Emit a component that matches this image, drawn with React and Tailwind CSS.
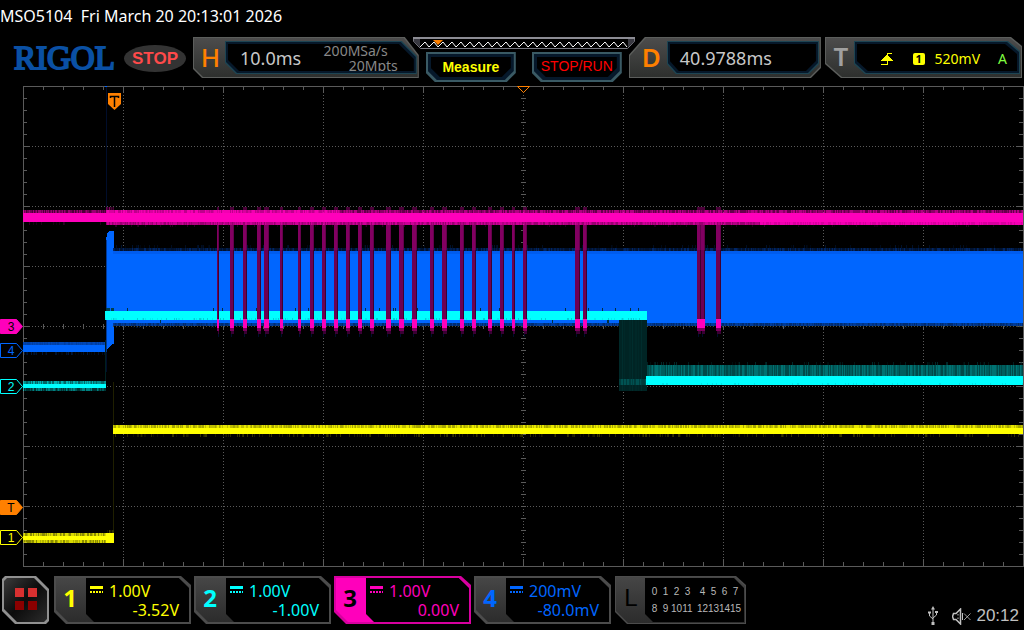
import clsx from 'clsx'

const GRID = { left: 23, right: 1023, top: 86, bottom: 566, midX: 523, midY: 326 }

const channels = [
  { id: 1, scale: '1.00V', offset: '-3.52V', text: 'text-[#ffff00]' },
  { id: 2, scale: '1.00V', offset: '-1.00V', text: 'text-[#00ffff]' },
  { id: 3, scale: '1.00V', offset: '0.00V', text: 'text-[#ff00bb]', active: true },
  { id: 4, scale: '200mV', offset: '-80.0mV', text: 'text-[#0066ff]' },
]

// [x, width] of every data burst on channel 3
const bursts = [
  [217, 2], [230, 4], [243, 4], [257, 4], [264, 5], [280, 3], [298, 3], [310, 4],
  [322, 4], [334, 4], [346, 4], [358, 4], [370, 4], [386, 5], [399, 5], [412, 5],
  [430, 4], [442, 5], [460, 4], [472, 4], [488, 4], [500, 4], [512, 3], [523, 4],
  [575, 5], [583, 4], [697, 4], [701, 4], [716, 5],
]

const range = (from, to, step) => {
  const out = []
  for (let v = from; v <= to; v += step) out.push(v)
  return out
}

// Repeatable random numbers, so the traces look the same on every render
const createRandom = (seed) => {
  let a = seed
  return () => {
    a = (a + 0x6d2b79f5) | 0
    let t = Math.imul(a ^ (a >>> 15), 1 | a)
    t = (t + Math.imul(t ^ (t >>> 7), 61 | t)) ^ t
    return ((t ^ (t >>> 14)) >>> 0) / 4294967296
  }
}

// One strip of flickering one-pixel columns, grouped in brightness levels
const Noise = ({ x, to, y, h, color, levels = [0.25, 0.45, 0.65, 0.85], density = 1 }) => {
  const paths = levels.map(() => '')
  const next = createRandom(x * 131 + y * 17 + h)
  for (let i = x; i < to; i++) {
    const level = Math.floor(next() * levels.length)
    if (next() <= density) paths[level] += `M${i} ${y}h1v${h}h-1z`
  }
  return paths.map((d, i) => <path key={i} d={d} fill={color} opacity={levels[i]} />)
}

const Graticule = () => {
  const { left, right, top, bottom, midX, midY } = GRID
  const cols = range(left + 100, right - 100, 100)
  const rows = range(top + 60, bottom - 60, 60)
  const xTicks = range(left + 20, right - 20, 20)
  const yTicks = range(top + 12, bottom - 12, 12)
  const dotted = [
    ...cols.map((x) => `M${x}.5 ${top}V${bottom}`),
    ...rows.map((y) => `M${left} ${y}.5H${right}`),
  ].join('')
  const solid = [
    ...xTicks.map((x) => {
      const len = (x - left) % 100 === 0 ? 7 : 4
      return `M${x}.5 ${top}v${len}M${x}.5 ${bottom}v-${len}M${x}.5 ${midY - 2}v5`
    }),
    ...yTicks.map((y) => {
      const len = (y - top) % 60 === 0 ? 7 : 4
      return `M${left} ${y}.5h${len}M${right} ${y}.5h-${len}M${midX - 2} ${y}.5h5`
    }),
  ].join('')
  return (
    <g fill="none" stroke="#5a5a5a">
      <path d={dotted} strokeDasharray="1 2" />
      <path d={solid} />
      <rect x={left + 0.5} y={top + 0.5} width={right - left - 0.5} height={bottom - top} />
    </g>
  )
}

const Traces = () => (
  <g>
    {/* Trigger edge */}
    <path d="M106 87h1v130h-1z" fill="#000d2b" />
    <path d="M105 86h2v1h-2z" fill="#0066ff" />
    <path d="M113 382h1v151h-1z" fill="#1f1f00" />
    <path d="M105 340h1v45h-1z" fill="#002020" />

    {/* Channel 4 */}
    <path d="M23 345h82v7h-82z" fill="#0066ff" />
    <path d="M23 342h82v3h-82z" fill="#003a99" />
    <Noise x={23} to={105} y={342} h={3} color="#0066ff" levels={[0.1, 0.2, 0.3]} />
    <Noise x={23} to={105} y={352} h={3} color="#001a44" density={0.4} />
    <path d="M106 352h1v20h-1z" fill="#000d2b" />
    <path d="M106 240l1-6 2-3h5v113h-2l-3 3-3 5z" fill="#0066ff" />
    <path d="M106 240h1v112h-1z" fill="#003a99" />
    <path d="M113 251h910v72h-910z" fill="#0066ff" />
    <path d="M113 251h910v3h-910z" fill="#005cee" />
    <path d="M113 248h910v3h-910z" fill="#00112e" />
    <Noise x={113} to={1023} y={248} h={3} color="#003a99" levels={[0.1, 0.3, 0.5]} density={0.6} />
    <Noise x={113} to={1023} y={245} h={3} color="#001433" density={0.12} />
    <path d="M113 323h910v3h-910z" fill="#003c99" />
    <Noise x={113} to={1023} y={323} h={3} color="#001433" levels={[0.2, 0.4]} density={0.6} />
    <Noise x={113} to={1023} y={326} h={2} color="#001433" density={0.15} />
    <path d="M113 326.5h910" stroke="#4a4a30" strokeDasharray="1 2" />

    {/* Channel 2 */}
    <path d="M23 384h83v4h-83z" fill="#00ffff" />
    <Noise x={23} to={106} y={381} h={3} color="#00ffff" levels={[0.4, 0.55, 0.7]} />
    <Noise x={23} to={106} y={388} h={3} color="#00ffff" levels={[0.2, 0.35, 0.5]} />
    <path d="M105 311h542v9h-542z" fill="#00ffff" />
    <Noise x={105} to={114} y={308} h={3} color="#003a3a" levels={[0.9]} density={0.8} />
    <Noise x={113} to={640} y={308} h={3} color="#002a2a" levels={[0.9]} density={0.03} />
    <Noise x={113} to={640} y={320} h={3} color="#002a2a" levels={[0.9]} density={0.015} />
    <Noise x={105} to={647} y={318} h={2} color="#00a0b0" levels={[0.2, 0.5]} density={0.25} />
    <path d="M619 320h28v71h-28z" fill="#002424" />
    <Noise x={619} to={647} y={320} h={71} color="#003c3c" levels={[0.2, 0.4]} density={0.5} />
    <Noise x={619} to={647} y={379} h={6} color="#007070" levels={[0.3, 0.6]} />
    <path d="M647 365h376v11h-376z" fill="#003c3c" />
    <Noise x={647} to={1023} y={365} h={11} color="#008080" levels={[0.2, 0.5, 0.8]} />
    <Noise x={647} to={1023} y={362} h={3} color="#003030" density={0.2} />
    <path d="M646 376h377v9h-377z" fill="#00ffff" />
    <Noise x={647} to={1023} y={383} h={2} color="#00a0b0" levels={[0.3]} density={0.1} />

    {/* Channel 1 */}
    <path d="M23 536h83v4h-83zM106 533h8v10h-8z" fill="#ffff00" />
    <Noise x={23} to={106} y={533} h={3} color="#ffff00" levels={[0.55, 0.7, 0.85]} />
    <Noise x={23} to={106} y={540} h={3} color="#ffff00" levels={[0.55, 0.7, 0.85]} />
    <Noise x={106} to={114} y={530} h={3} color="#4a4a00" density={0.6} />
    <path d="M113 428h910v6h-910z" fill="#ffff00" />
    <Noise x={113} to={1023} y={425} h={3} color="#ffff00" levels={[0.65, 0.75, 0.9]} />
    <Noise x={113} to={1023} y={434} h={3} color="#3a3a00" density={0.25} />

    {/* Channel 3 */}
    <path d="M23 213h1000v9h-1000z" fill="#ff00bb" />
    <Noise x={23} to={106} y={210} h={3} color="#ff00bb" levels={[0.3, 0.45, 0.6]} />
    <Noise x={106} to={114} y={207} h={3} color="#99006f" />
    <Noise x={106} to={340} y={210} h={3} color="#ff00bb" levels={[0.75, 0.85, 0.95]} />
    <Noise x={340} to={1023} y={210} h={3} color="#ff00bb" levels={[0.4, 0.55, 0.7]} />
    <Noise x={23} to={106} y={222} h={3} color="#33002a" density={0.2} />
    <Noise x={106} to={760} y={222} h={3} color="#ff00bb" levels={[0.6, 0.7, 0.8]} />
    <Noise x={760} to={1023} y={222} h={3} color="#ff00bb" levels={[0.85, 0.95]} />
    <Noise x={113} to={1023} y={225} h={2} color="#33002a" density={0.1} />
    {bursts.map(([x, w]) => (
      <g key={x}>
        <rect x={x} y={225} width={w} height={94} fill="#6e0052" />
        <rect x={x + w - 1} y={225} width={1} height={94} fill="#3e0030" />
        <rect x={x} y={225} width={w} height={25} fill="#a00078" opacity={0.4} />
        <rect x={x} y={207} width={w} height={3} fill="#4a0038" />
        <rect x={x} y={319} width={w} height={9} fill="#ff00bb" />
        <rect x={x} y={328} width={w} height={3} fill="#7c005c" />
        <rect x={x + 1} y={331} width={w - 1} height={3} fill="#3a0034" />
        <rect x={x + 1} y={334} width={1} height={3} fill="#000d2b" />
      </g>
    ))}
  </g>
)

const Tag = ({ y, label, color, filled }) => (
  <g>
    <path
      d={`M0.5 ${y + 0.5}h16l6 7l-6 7h-16z`}
      fill={filled ? color : '#000'}
      stroke={color}
    />
    <text x="11" y={y + 12} textAnchor="middle" fontSize="12" fill={filled ? '#000' : color}>
      {label}
    </text>
  </g>
)

const Waveform = () => (
  <svg
    viewBox="0 84 1024 486"
    className="block h-auto w-full font-['Liberation_Sans',sans-serif]"
    role="img"
    aria-label="Waveform display"
  >
    <g shapeRendering="crispEdges">
      <Graticule />
      <Traces />
    </g>
    <path d="M108 93h13v11l-6.500 6l-6.500 -6z" fill="#ff8000" />
    <path d="M110.500 98v-1.500h8v1.500M114.500 96v11" fill="none" stroke="#000" strokeWidth="1.500" />
    <path d="M517.500 86.500h12l-6 6z" fill="#000" stroke="#ff8000" />
    <Tag y={319} label="3" color="#ff00bb" filled />
    <Tag y={343} label="4" color="#0066ff" />
    <Tag y={379} label="2" color="#00ffff" />
    <Tag y={500} label="T" color="#ff8000" filled />
    <Tag y={530} label="1" color="#ffff00" />
  </svg>
)

const MemoryBar = () => (
  <svg viewBox="0 0 222 12" className="h-3 w-full" aria-hidden="true">
    <path d="M0.500 0.500h221v4l-7 7h-207l-7 -7z" fill="#000" stroke="#77777f" />
    <path d="M0 1h222" stroke="#8c8c94" strokeWidth="2" />
    <path d="M1 2h6v8l-6 -5zM221 2h-6v8l6 -5z" fill="#3a3a42" />
    <path
      d={`M7 10${range(1, 23, 1).map(() => 'l5 -5l4 5').join('')}`}
      fill="none"
      stroke="#fff"
    />
    <path d="M20 3h10l-5 5z" fill="#ff8000" />
  </svg>
)

const HeaderPanel = ({ label, labelClass, outer, screen, children, className }) => (
  <div className={clsx('h-[41px] min-w-0 bg-[#5c5e5c] p-px', outer, className)}>
    <div className={clsx('flex h-full bg-linear-to-b from-[#4c4c4c] to-[#2e302e] pt-[3px] pr-px pb-[3px]', outer)}>
      <div className={clsx('flex shrink-0 items-center justify-center text-[26px]', labelClass)}>
        {label}
      </div>
      <div className={clsx('min-w-0 grow bg-[#1d4452] p-px', screen)}>
        <div className={clsx('h-full bg-[#06182a] p-[2px]', screen)}>
          <div className={clsx('flex h-full items-center bg-black', screen)}>{children}</div>
        </div>
      </div>
    </div>
  </div>
)

const TouchButton = ({ className, children }) => {
  const shape =
    '[clip-path:polygon(0_0,100%_0,100%_calc(100%_-_9px),calc(100%_-_9px)_100%,9px_100%,0_calc(100%_-_9px))]'
  return (
    <button type="button" className={clsx('h-[30px] w-[90px] bg-[#3a5a64] p-[2px]', shape)}>
      <span className={clsx('block h-full bg-[#06182a] p-[3px]', shape)}>
        <span className={clsx('flex h-full items-center justify-center bg-black text-sm', shape, className)}>
          {children}
        </span>
      </span>
    </button>
  )
}

const Header = () => (
  <header className="flex h-[52px] items-start pt-[5px] pr-0.5">
    <div className="flex h-[41px] w-[193px] shrink-0 items-center pl-3.5">
      <span className="w-[110px] font-['Liberation_Serif',serif] text-[33px] leading-10 text-[#0a50a4] [-webkit-text-stroke:2px_#0a50a4]">
        RIGOL
      </span>
      <span className="mt-0.5 flex h-[27px] w-[62px] items-center justify-center rounded-[50%] bg-[#333] pt-px font-['Liberation_Sans',sans-serif] text-[17px] font-bold text-[#ff4a4a]">
        STOP
      </span>
    </div>

    <HeaderPanel
      label="H"
      className="flex-[226]"
      labelClass="w-[31px] pl-0.5 text-[#ff8000] font-medium"
      outer="[clip-path:polygon(0_0,calc(100%_-_14px)_0,100%_18px,100%_100%,9px_100%,0_calc(100%_-_9px))]"
      screen="[clip-path:polygon(0_0,calc(100%_-_15px)_0,100%_15px,100%_100%,11px_100%,0_calc(100%_-_11px))]"
    >
      <span className="pl-3 text-lg leading-5 text-[#c8c8c8]">10.0ms</span>
      <span className="ml-auto pr-4 text-right text-sm leading-[15px] text-[#888]">
        <span className="block pr-2.5">200MSa/s</span>
        <span className="block">20Mpts</span>
      </span>
    </HeaderPanel>

    <div className="relative z-10 -mx-1.5 w-[222px] shrink-0">
      <MemoryBar />
      <div className="flex justify-between pt-[3px] pr-[13px] pl-[13px]">
        <TouchButton className="font-['Liberation_Sans',sans-serif] font-bold text-[#ffff00]">Measure</TouchButton>
        <TouchButton className="pb-0.5 font-['Liberation_Sans',sans-serif] text-[#ff0000]">STOP/RUN</TouchButton>
      </div>
    </div>

    <HeaderPanel
      label="D"
      className="flex-[192]"
      labelClass="w-[37px] pl-1.5 text-[#ff8000] font-semibold"
      outer="[clip-path:polygon(16px_0,100%_0,100%_calc(100%_-_10px),calc(100%_-_10px)_100%,0_100%,0_18px)]"
      screen="[clip-path:polygon(0_0,100%_0,100%_calc(100%_-_10px),calc(100%_-_10px)_100%,9px_100%,0_calc(100%_-_10px))]"
    >
      <span className="pl-2.5 text-lg leading-5 text-[#c8c8c8]">40.9788ms</span>
    </HeaderPanel>

    <HeaderPanel
      label="T"
      className="ml-1 flex-[197]"
      labelClass="w-[28px] pb-0.5 pl-0.5 text-[#a0a0a0] font-semibold"
      outer="[clip-path:polygon(0_0,calc(100%_-_11px)_0,100%_9px,100%_100%,16px_100%,0_calc(100%_-_14px))]"
      screen="[clip-path:polygon(0_0,calc(100%_-_12px)_0,100%_10px,100%_100%,11px_100%,0_calc(100%_-_10px))]"
    >
      <div className="flex grow items-center justify-end pt-0.5 pr-2.5 text-sm text-[#ffff00]">
        <svg width="12" height="14" viewBox="0 0 12 14" className="mr-5" aria-label="Rising edge" shapeRendering="crispEdges">
          <path d="M0 12.500h6.500V1.500H11" fill="none" stroke="currentColor" />
          <path d="M6 2l6 7H0z" fill="currentColor" />
        </svg>
        <span className="mr-2.5 flex h-3 w-3 items-center justify-center rounded-xs bg-[#ffff00] text-[11px] leading-3 font-bold text-black">
          1
        </span>
        <span className="mr-[18px]">520mV</span>
        <span className="text-[#80ff40]">A</span>
      </div>
    </HeaderPanel>
  </header>
)

const bottomShape =
  '[clip-path:polygon(0_0,calc(100%_-_10px)_0,100%_9px,100%_100%,12px_100%,0_calc(100%_-_12px))]'
const bottomScreen =
  '[clip-path:polygon(0_0,calc(100%_-_10px)_0,100%_10px,100%_100%,8px_100%,0_calc(100%_-_8px))]'

const ChannelPanel = ({ channel }) => (
  <button
    type="button"
    aria-pressed={!!channel.active}
    className={clsx(
      'h-12 w-[137px] shrink-0 p-[2px]',
      channel.active ? 'bg-[#d800a0]' : 'bg-[#4c4c4c]',
      channel.text,
      bottomShape,
    )}
  >
    <span
      className={clsx(
        'flex h-full',
        channel.active ? 'bg-[#ff00bb]' : 'bg-linear-to-b from-[#464646] to-[#2c2c2c]',
        bottomShape,
      )}
    >
      <span
        className={clsx(
          'flex w-[30px] shrink-0 items-center justify-center pr-0.5 pb-1 text-2xl font-bold',
          channel.active && 'text-black',
        )}
      >
        {channel.id}
      </span>
      <span className={clsx('flex grow flex-col justify-center bg-black pt-0.5 pr-2.5 pl-1 text-base leading-[19px]', bottomScreen)}>
        <span className="flex items-center gap-1.5">
          <svg width="13" height="7" viewBox="0 0 13 7" className="mb-1" aria-label="DC coupling" shapeRendering="crispEdges">
            <path d="M0 0h13v3H0z" fill="currentColor" />
            <path d="M0 6h13" stroke="currentColor" strokeWidth="2" strokeDasharray="2 1" />
          </svg>
          {channel.scale}
        </span>
        <span className="block text-right">{channel.offset}</span>
      </span>
    </span>
  </button>
)

const LogicPanel = () => (
  <button
    type="button"
    className={clsx('ml-px h-12 w-[131px] shrink-0 bg-[#4c4c4c] p-px', bottomShape)}
  >
    <span className={clsx('flex h-full bg-linear-to-b from-[#464646] to-[#2c2c2c] p-px', bottomShape)}>
      <span className="flex w-[28px] shrink-0 items-center justify-center pb-1 font-['Liberation_Sans',sans-serif] text-2xl leading-10 text-black">
        L
      </span>
      <span
        className={clsx(
          "flex grow flex-col justify-center bg-black pl-1 font-['Liberation_Sans',sans-serif] text-[10px] leading-[17px] text-[#b8b8b8]",
          bottomScreen,
        )}
      >
        {[0, 8].map((start) => (
          <span key={start} className="flex">
            {range(start, start + 7, 1).map((n) => (
              <span key={n} className={clsx('flex w-[11px] justify-center', n % 8 === 4 && 'ml-1')}>
                {n}
              </span>
            ))}
          </span>
        ))}
      </span>
    </span>
  </button>
)

const MenuButton = () => {
  const shape =
    '[clip-path:polygon(3px_0,calc(100%_-_13px)_0,100%_13px,100%_calc(100%_-_3px),calc(100%_-_3px)_100%,13px_100%,0_calc(100%_-_13px),0_3px)]'
  return (
    <button type="button" aria-label="Menu" className={clsx('h-12 w-[47px] shrink-0 bg-[#909090] p-[2px]', shape)}>
      <span
        className={clsx(
          'flex h-full items-center justify-center bg-linear-to-br from-[#3c3c3c] via-[#0c0c0c] to-[#2c2c2c] pb-0.5',
          shape,
        )}
      >
        <span className="grid grid-cols-2 gap-1">
          <span className="size-[9px] bg-[#d83030]" />
          <span className="size-[9px] bg-[#d83030]" />
          <span className="size-[9px] bg-[#8c0000]" />
          <span className="size-[9px] bg-[#8c0000]" />
        </span>
      </span>
    </button>
  )
}

const StatusIcons = () => (
  <div className="mt-[30px] ml-auto flex h-5 items-center pr-[5px] font-['Liberation_Sans',sans-serif] text-[17px] leading-[18px] text-[#c0c0c0]">
    <svg width="10" height="20" viewBox="0 0 10 20" className="mr-3.5" fill="none" stroke="currentColor" aria-label="USB">
      <path d="M5 2v14M1.500 7v3l3.500 3M8.500 6v3l-3.500 3" />
      <path d="M5 0l2 3.500H3z" fill="currentColor" stroke="none" />
      <path d="M0 5.500h3v2H0zM7 5h3v2H7zM3.500 16h3v3h-3z" fill="currentColor" stroke="none" />
    </svg>
    <svg width="19" height="17" viewBox="0 0 19 17" className="mr-[5px]" fill="none" stroke="currentColor" aria-label="Muted">
      <path d="M8.500 1v15l-4.500 -4.500H1.500L0.500 8.500l1 -3H4z" strokeWidth="1.500" />
      <path d="M6 6v1.500M6 9.500v1.500M10.500 5v7" />
      <path d="M12 5.500l6.500 6.500M18.500 5.500L12 12" strokeWidth="0.800" />
    </svg>
    <span>20:12</span>
  </div>
)

const App = () => (
  <main className="flex min-h-screen w-full flex-col bg-black font-['Noto_Sans',sans-serif]">
    <div className="h-8 text-base leading-8 whitespace-pre text-white">
      MSO5104{'  '}Fri March 20 20:13:01 2026
    </div>
    <Header />
    <Waveform />
    <footer className="flex gap-[3px] pt-1.5 pb-1 pl-0.5">
      <MenuButton />
      <div className="flex gap-[3px] pl-0.5">
        {channels.map((channel) => (
          <ChannelPanel key={channel.id} channel={channel} />
        ))}
        <LogicPanel />
      </div>
      <StatusIcons />
    </footer>
  </main>
)

export default App
